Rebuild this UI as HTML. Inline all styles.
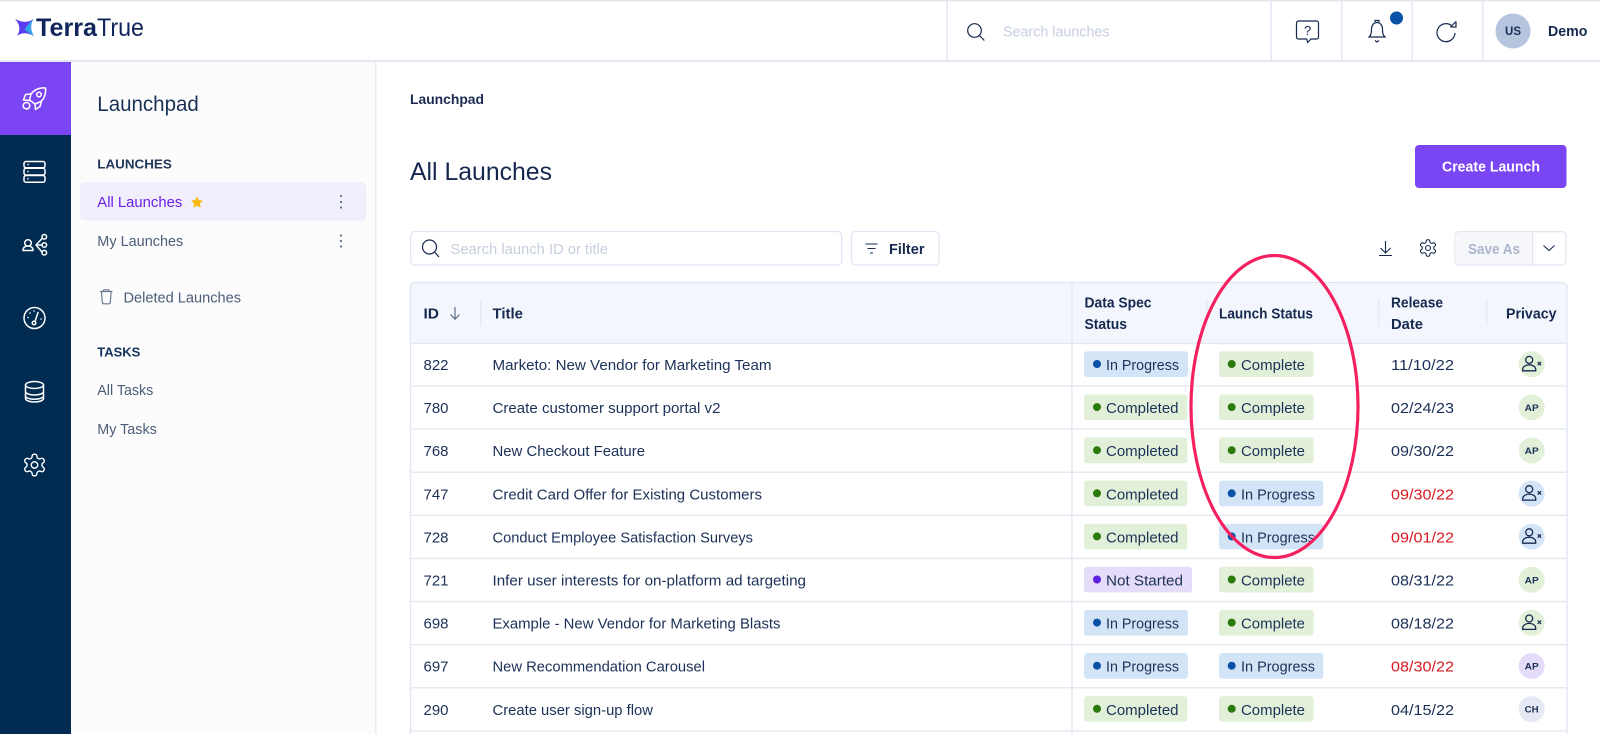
<!DOCTYPE html>
<html lang="en"><head><meta charset="utf-8"><title>TerraTrue Launchpad</title>
<style>
html,body{margin:0;padding:0;background:#fff;width:1600px;height:734px;overflow:hidden}
svg{display:block}
text{font-family:"Liberation Sans",sans-serif;white-space:pre}
.r{font-size:14.6px;fill:#1c3157}
.b{font-size:14.6px;fill:#1c3157}
.h{font-size:14.4px;font-weight:700;fill:#16294f}
.n{font-size:14.8px;fill:#4b5d78}
.a{font-size:9.6px;font-weight:700;fill:#1c3157}
</style></head><body>
<svg xmlns="http://www.w3.org/2000/svg" width="1600" height="734" viewBox="0 0 1600 734">
<defs>
<symbol id="gear" viewBox="0 0 24 24"><path fill="none" stroke-linecap="round" stroke-linejoin="round" d="M12.22 2h-.44a2 2 0 0 0-2 2v.18a2 2 0 0 1-1 1.73l-.43.25a2 2 0 0 1-2 0l-.15-.08a2 2 0 0 0-2.73.73l-.22.38a2 2 0 0 0 .73 2.73l.15.1a2 2 0 0 1 1 1.72v.51a2 2 0 0 1-1 1.74l-.15.09a2 2 0 0 0-.73 2.73l.22.38a2 2 0 0 0 2.73.73l.15-.08a2 2 0 0 1 2 0l.43.25a2 2 0 0 1 1 1.73V20a2 2 0 0 0 2 2h.44a2 2 0 0 0 2-2v-.18a2 2 0 0 1 1-1.73l.43-.25a2 2 0 0 1 2 0l.15.08a2 2 0 0 0 2.73-.73l.22-.39a2 2 0 0 0-.73-2.73l-.15-.08a2 2 0 0 1-1-1.74v-.5a2 2 0 0 1 1-1.74l.15-.09a2 2 0 0 0 .73-2.73l-.22-.38a2 2 0 0 0-2.73-.73l-.15.08a2 2 0 0 1-2 0l-.43-.25a2 2 0 0 1-1-1.73V4a2 2 0 0 0-2-2z"/><circle cx="12" cy="12" r="3" fill="none"/></symbol>
<g id="px" fill="none" stroke="#16294f" stroke-width="1.3"><circle cx="-2.5" cy="-4.4" r="3.5"/><path d="M-9 6.500v-1.300c0-3 3.300-4.700 6.500-4.700s6.500 1.700 6.500 4.700v1.300z"/><path d="M6 -2.400l3.400 3.400M9.400 -2.400l-3.400 3.400" stroke-width="1.200"/></g>
</defs>

<!-- top bar -->
<rect x="0" y="0" width="1600" height="1.500" fill="#e4e7ef"/>
<rect x="0" y="60" width="1600" height="2" fill="#e3e7f1"/>
<path d="M15 19Q26 24.500 33.500 19Q28.500 27 33.800 36Q24 30.500 17 36Q22.500 27 15 19Z" fill="#5a3df0"/>
<path d="M33.500 19Q28.500 27 33.800 36Q28 32.500 24.500 29.500Q28 24 33.500 19Z" fill="#35a4ea"/>
<text x="36" y="36" font-size="25" font-weight="700" fill="#10265a" textLength="61" lengthAdjust="spacingAndGlyphs">Terra</text>
<text x="97" y="36" font-size="25" fill="#10265a" textLength="47" lengthAdjust="spacingAndGlyphs">True</text>
<g fill="#e3e7f1"><rect x="946.500" y="1" width="1.500" height="59"/><rect x="1270.500" y="1" width="1.500" height="59"/><rect x="1341" y="1" width="1.500" height="59"/><rect x="1411.500" y="1" width="1.500" height="59"/><rect x="1482" y="1" width="1.500" height="59"/></g>
<g fill="none" stroke="#16294f" stroke-width="1.200">
<circle cx="974.500" cy="30.500" r="6.800"/><path d="M979.500 35.500l4.800 5"/>
<path d="M1298.500 21h18a2 2 0 0 1 2 2v14a2 2 0 0 1-2 2h-5.500l-3.300 3.500-1-3.500h-8.200a2 2 0 0 1-2-2v-14a2 2 0 0 1 2-2z"/>
<path d="M1369 37c2-2 2.500-3.500 2.500-7.500 0-4.500 2.500-7 5.500-7s5.500 2.500 5.500 7c0 4 .5 5.500 2.500 7.500z"/><path d="M1375 22v-1.500h4V22M1375 40.500l2 1.500 2-1.500"/>
<path d="M1451.500 25.500a9 9 0 1 0 3.500 7.500"/><path d="M1450.500 27h5.500v-5.500M1456 21.500l-5.500 5.500"/>
</g>
<text x="1304" y="35" font-size="13" fill="#16294f">?</text>
<circle cx="1396.500" cy="18" r="6.500" fill="#0a52a8"/>
<text x="1003" y="36.500" font-size="14.800" fill="#c6cfde" textLength="106.500" lengthAdjust="spacingAndGlyphs">Search launches</text>
<circle cx="1513" cy="31" r="17.500" fill="#b5c5de"/>
<text x="1505" y="35" font-size="11.500" font-weight="700" fill="#1a2f55" textLength="16" lengthAdjust="spacingAndGlyphs">US</text>
<text x="1548" y="36" font-size="14.500" font-weight="700" fill="#16294f" textLength="39.500" lengthAdjust="spacingAndGlyphs">Demo</text>

<!-- rail -->
<rect x="0" y="62" width="71" height="672" fill="#012b50"/>
<rect x="0" y="62" width="71" height="73" fill="#7c45f4"/>
<g fill="none" stroke="#fff" stroke-width="1.500" stroke-linejoin="round" stroke-linecap="round">
<path d="M45.500 88c-6-.5-11 1.500-14.500 6l-1.500 6 5.500 4 6-2.500c4-3.500 5-8 4.500-13.500z"/><circle cx="39" cy="94.500" r="2.300"/>
<path d="M31 94l-5.500.5-2 5.500 6 .5M35 104l.5 5.500 4.500-3 1.500-5"/><path d="M24 108a3.300 3.300 0 1 1 5.500-3.500 3.300 3.300 0 0 1-3 4.500z"/>
<rect x="24" y="161.500" width="21" height="6.300" rx="2"/><rect x="24" y="168.300" width="21" height="6.700" rx="2"/><rect x="24" y="175.500" width="21" height="6.700" rx="2"/>
<path d="M28 164.500h.1M28 171.500h.1M28 178.800h.1"/>
<circle cx="28" cy="243" r="3.300"/><path d="M23 250.500c0-3 2-4.500 5-4.500s5 1.500 5 4.500z"/>
<path d="M36 245l6-6.500M36 245h6M36 245l6 7"/><circle cx="44.300" cy="236.800" r="2.300"/><circle cx="44.300" cy="245" r="2.300"/><circle cx="44.300" cy="252.700" r="2.300"/>
<circle cx="34.500" cy="318" r="10.500"/><circle cx="34" cy="323" r="1.800"/><path d="M35 321.500l3-9M28 317.500h.1M30 313h.1M34 311h.1M41 319h.1"/>
<ellipse cx="34.500" cy="385" rx="9" ry="3.500"/><path d="M25.500 385v13.500c0 2 4 3.500 9 3.500s9-1.500 9-3.500V385M25.500 391.500c0 2 4 3.500 9 3.500s9-1.500 9-3.500M25.500 396c0 1.800 4 3.200 9 3.200s9-1.400 9-3.200"/>
</g>
<use href="#gear" x="21.500" y="452" width="26" height="26" stroke="#fff" stroke-width="1.300"/>

<!-- side panel -->
<rect x="71" y="62" width="304.500" height="672" fill="#fcfcfd"/>
<rect x="375" y="62" width="1.500" height="672" fill="#e9ebf4"/>
<text x="97.300" y="111" font-size="21" fill="#1a3355" textLength="101.500" lengthAdjust="spacingAndGlyphs">Launchpad</text>
<text x="97.300" y="168.300" font-size="12.500" font-weight="700" fill="#23395a" textLength="74.500" lengthAdjust="spacingAndGlyphs">LAUNCHES</text>
<rect x="80" y="182.300" width="286" height="38.500" rx="4" fill="#f1effc"/>
<text x="97.300" y="207" font-size="14.800" fill="#6a1fe8" textLength="85" lengthAdjust="spacingAndGlyphs">All Launches</text>
<path d="M197 196.200l1.800 3.900 4.200.5-3.100 2.900.8 4.200-3.700-2.100-3.700 2.100.8-4.200-3.100-2.900 4.200-.5z" fill="#fbb80f"/>
<g fill="#5f6f88"><circle cx="341" cy="196" r="1.100"/><circle cx="341" cy="202" r="1.100"/><circle cx="341" cy="207.500" r="1.100"/><circle cx="341" cy="235.500" r="1.100"/><circle cx="341" cy="241" r="1.100"/><circle cx="341" cy="246.500" r="1.100"/></g>
<text class="n" x="97.300" y="246" textLength="86" lengthAdjust="spacingAndGlyphs">My Launches</text>
<path d="M100 291.500h12.500M103 291.500l.8-1.700h5l.8 1.700M101.500 291.500l.8 11a1.500 1.500 0 0 0 1.500 1.300h5a1.500 1.500 0 0 0 1.500-1.300l.8-11" fill="none" stroke="#6a7a93" stroke-width="1.200"/>
<text class="n" x="123.500" y="302.500" textLength="117.500" lengthAdjust="spacingAndGlyphs">Deleted Launches</text>
<text x="97.300" y="356.700" font-size="12.500" font-weight="700" fill="#12325a" textLength="43" lengthAdjust="spacingAndGlyphs">TASKS</text>
<text class="n" x="97.300" y="395" textLength="56" lengthAdjust="spacingAndGlyphs">All Tasks</text>
<text class="n" x="97.300" y="434" textLength="59.500" lengthAdjust="spacingAndGlyphs">My Tasks</text>

<!-- main header -->
<text x="410" y="104" font-size="13.800" font-weight="700" fill="#1a2b4f" textLength="74" lengthAdjust="spacingAndGlyphs">Launchpad</text>
<text x="410" y="180" font-size="25" fill="#16274f" textLength="142" lengthAdjust="spacingAndGlyphs">All Launches</text>
<rect x="1415" y="145" width="151.500" height="43" rx="4" fill="#7a45f2"/>
<text x="1442" y="171.500" font-size="15" font-weight="700" fill="#fff" textLength="98" lengthAdjust="spacingAndGlyphs">Create Launch</text>

<!-- toolbar -->
<rect x="410.700" y="231.500" width="431" height="33.500" rx="4" fill="#fff" stroke="#dfe4f0" stroke-width="1.200"/>
<g fill="none" stroke="#16294f" stroke-width="1.200"><circle cx="429.500" cy="247" r="7"/><path d="M434.500 252l4.500 5"/></g>
<text x="450.500" y="254" font-size="14.800" fill="#c6cfde" textLength="157.500" lengthAdjust="spacingAndGlyphs">Search launch ID or title</text>
<rect x="851.500" y="231.500" width="87.500" height="33.500" rx="4" fill="#fff" stroke="#dfe4f0" stroke-width="1.200"/>
<path d="M865.500 244h12M867.500 248.500h8M870 253h3" stroke="#16294f" stroke-width="1.100" fill="none"/>
<text x="889" y="254" font-size="14.500" font-weight="700" fill="#16294f" textLength="35.500" lengthAdjust="spacingAndGlyphs">Filter</text>
<path d="M1385.500 241v11.500M1380.500 248l5 5 5-5M1379 255.500h13" stroke="#16294f" stroke-width="1.100" fill="none"/>
<use href="#gear" x="1418" y="238" width="20" height="20" stroke="#16294f" stroke-width="1.300"/>
<rect x="1455" y="231.700" width="111" height="33.300" rx="4" fill="#fff" stroke="#dfe4f0" stroke-width="1.200"/>
<path d="M1459 232.300h73v32.100h-73a4 4 0 0 1-4-4v-24a4 4 0 0 1 4-4z" fill="#f6f7fb"/>
<rect x="1532" y="232" width="1.200" height="33" fill="#dfe4f0"/>
<text x="1468" y="254" font-size="14.500" font-weight="700" fill="#abb6ca" textLength="52" lengthAdjust="spacingAndGlyphs">Save As</text>
<path d="M1543.500 245.500l5.500 5 5.500-5" fill="none" stroke="#16294f" stroke-width="1.100"/>

<!-- table -->
<path d="M410.500 734V287.500a5 5 0 0 1 5-5H1562a5 5 0 0 1 5 5V734" fill="#fff" stroke="#dfe4f0" stroke-width="1.300"/>
<path d="M411.200 343V288a5 5 0 0 1 5-5H1561.500a5 5 0 0 1 5 5v55z" fill="#f4f6fd"/>
<g fill="#e3e7f2">
<rect x="480" y="300" width="1.300" height="26"/><rect x="1071.300" y="283" width="1.300" height="451"/><rect x="1206" y="300" width="1.300" height="26"/><rect x="1378" y="300" width="1.300" height="26"/><rect x="1486" y="300" width="1.300" height="26"/>
<rect x="410.500" y="342.800" width="1156.500" height="1.300"/><rect x="410.500" y="385.400" width="1156.500" height="1.300"/><rect x="410.500" y="428.500" width="1156.500" height="1.300"/><rect x="410.500" y="471.600" width="1156.500" height="1.300"/><rect x="410.500" y="514.700" width="1156.500" height="1.300"/><rect x="410.500" y="557.800" width="1156.500" height="1.300"/><rect x="410.500" y="600.900" width="1156.500" height="1.300"/><rect x="410.500" y="644" width="1156.500" height="1.300"/><rect x="410.500" y="687.100" width="1156.500" height="1.300"/><rect x="410.500" y="730.200" width="1156.500" height="1.300"/>
</g>
<text class="h" x="423.500" y="318.700" textLength="15.500" lengthAdjust="spacingAndGlyphs">ID</text>
<path d="M455 307v12M450.500 314.500l4.500 4.700 4.500-4.700" fill="none" stroke="#52627f" stroke-width="1.100"/>
<text class="h" x="492.500" y="318.700" textLength="30.500" lengthAdjust="spacingAndGlyphs">Title</text>
<text class="h" x="1084.500" y="307.300" textLength="67" lengthAdjust="spacingAndGlyphs">Data Spec</text>
<text class="h" x="1084.500" y="329" textLength="42.500" lengthAdjust="spacingAndGlyphs">Status</text>
<text class="h" x="1219" y="318.300" textLength="94" lengthAdjust="spacingAndGlyphs">Launch Status</text>
<text class="h" x="1391" y="307.300" textLength="52" lengthAdjust="spacingAndGlyphs">Release</text>
<text class="h" x="1391" y="329" textLength="32" lengthAdjust="spacingAndGlyphs">Date</text>
<text class="h" x="1506" y="318.300" textLength="50.500" lengthAdjust="spacingAndGlyphs">Privacy</text>

<!-- row 1 -->
<g>
<text class="r" x="423.500" y="370" textLength="25" lengthAdjust="spacingAndGlyphs">822</text>
<text class="r" x="492.500" y="370" textLength="279" lengthAdjust="spacingAndGlyphs">Marketo: New Vendor for Marketing Team</text>
<rect x="1084" y="351.300" width="104" height="25.700" rx="3" fill="#d4e4f7"/><circle cx="1097" cy="364" r="4" fill="#0a52a8"/><text class="b" x="1106" y="370" textLength="73" lengthAdjust="spacingAndGlyphs">In Progress</text>
<rect x="1219" y="351.300" width="94.700" height="25.700" rx="3" fill="#e2f0d9"/><circle cx="1231.700" cy="364" r="4" fill="#2b7a0b"/><text class="b" x="1241" y="370" textLength="64" lengthAdjust="spacingAndGlyphs">Complete</text>
<text class="r" x="1391" y="370" textLength="63" lengthAdjust="spacingAndGlyphs">11/10/22</text>
<circle cx="1531.700" cy="364.300" r="13" fill="#e2f0d9"/><use href="#px" transform="translate(1531.700,364.300)"/>
</g>
<!-- row 2 -->
<g transform="translate(0,43.100)">
<text class="r" x="423.500" y="370" textLength="25" lengthAdjust="spacingAndGlyphs">780</text>
<text class="r" x="492.500" y="370" textLength="228" lengthAdjust="spacingAndGlyphs">Create customer support portal v2</text>
<rect x="1084" y="351.300" width="103.300" height="25.700" rx="3" fill="#e2f0d9"/><circle cx="1097" cy="364" r="4" fill="#2b7a0b"/><text class="b" x="1106" y="370" textLength="72.500" lengthAdjust="spacingAndGlyphs">Completed</text>
<rect x="1219" y="351.300" width="94.700" height="25.700" rx="3" fill="#e2f0d9"/><circle cx="1231.700" cy="364" r="4" fill="#2b7a0b"/><text class="b" x="1241" y="370" textLength="64" lengthAdjust="spacingAndGlyphs">Complete</text>
<text class="r" x="1391" y="370" textLength="63" lengthAdjust="spacingAndGlyphs">02/24/23</text>
<circle cx="1531.700" cy="364.300" r="13" fill="#e2f0d9"/><text class="a" x="1524.700" y="367.800" textLength="14" lengthAdjust="spacingAndGlyphs">AP</text>
</g>
<!-- row 3 -->
<g transform="translate(0,86.200)">
<text class="r" x="423.500" y="370" textLength="25" lengthAdjust="spacingAndGlyphs">768</text>
<text class="r" x="492.500" y="370" textLength="152.500" lengthAdjust="spacingAndGlyphs">New Checkout Feature</text>
<rect x="1084" y="351.300" width="103.300" height="25.700" rx="3" fill="#e2f0d9"/><circle cx="1097" cy="364" r="4" fill="#2b7a0b"/><text class="b" x="1106" y="370" textLength="72.500" lengthAdjust="spacingAndGlyphs">Completed</text>
<rect x="1219" y="351.300" width="94.700" height="25.700" rx="3" fill="#e2f0d9"/><circle cx="1231.700" cy="364" r="4" fill="#2b7a0b"/><text class="b" x="1241" y="370" textLength="64" lengthAdjust="spacingAndGlyphs">Complete</text>
<text class="r" x="1391" y="370" textLength="63" lengthAdjust="spacingAndGlyphs">09/30/22</text>
<circle cx="1531.700" cy="364.300" r="13" fill="#e2f0d9"/><text class="a" x="1524.700" y="367.800" textLength="14" lengthAdjust="spacingAndGlyphs">AP</text>
</g>
<!-- row 4 -->
<g transform="translate(0,129.300)">
<text class="r" x="423.500" y="370" textLength="25" lengthAdjust="spacingAndGlyphs">747</text>
<text class="r" x="492.500" y="370" textLength="269.500" lengthAdjust="spacingAndGlyphs">Credit Card Offer for Existing Customers</text>
<rect x="1084" y="351.300" width="103.300" height="25.700" rx="3" fill="#e2f0d9"/><circle cx="1097" cy="364" r="4" fill="#2b7a0b"/><text class="b" x="1106" y="370" textLength="72.500" lengthAdjust="spacingAndGlyphs">Completed</text>
<rect x="1219" y="351.300" width="104.300" height="25.700" rx="3" fill="#d4e4f7"/><circle cx="1231.700" cy="364" r="4" fill="#0a52a8"/><text class="b" x="1241" y="370" textLength="74" lengthAdjust="spacingAndGlyphs">In Progress</text>
<text class="r" x="1391" y="370" style="fill:#d7191f" textLength="63" lengthAdjust="spacingAndGlyphs">09/30/22</text>
<circle cx="1531.700" cy="364.300" r="13" fill="#d4e4f7"/><use href="#px" transform="translate(1531.700,364.300)"/>
</g>
<!-- row 5 -->
<g transform="translate(0,172.400)">
<text class="r" x="423.500" y="370" textLength="25" lengthAdjust="spacingAndGlyphs">728</text>
<text class="r" x="492.500" y="370" textLength="260.500" lengthAdjust="spacingAndGlyphs">Conduct Employee Satisfaction Surveys</text>
<rect x="1084" y="351.300" width="103.300" height="25.700" rx="3" fill="#e2f0d9"/><circle cx="1097" cy="364" r="4" fill="#2b7a0b"/><text class="b" x="1106" y="370" textLength="72.500" lengthAdjust="spacingAndGlyphs">Completed</text>
<rect x="1219" y="351.300" width="104.300" height="25.700" rx="3" fill="#d4e4f7"/><circle cx="1231.700" cy="364" r="4" fill="#0a52a8"/><text class="b" x="1241" y="370" textLength="74" lengthAdjust="spacingAndGlyphs">In Progress</text>
<text class="r" x="1391" y="370" style="fill:#d7191f" textLength="63" lengthAdjust="spacingAndGlyphs">09/01/22</text>
<circle cx="1531.700" cy="364.300" r="13" fill="#d4e4f7"/><use href="#px" transform="translate(1531.700,364.300)"/>
</g>
<!-- row 6 -->
<g transform="translate(0,215.500)">
<text class="r" x="423.500" y="370" textLength="25" lengthAdjust="spacingAndGlyphs">721</text>
<text class="r" x="492.500" y="370" textLength="313.500" lengthAdjust="spacingAndGlyphs">Infer user interests for on-platform ad targeting</text>
<rect x="1084" y="351.300" width="108" height="25.700" rx="3" fill="#e5dcfa"/><circle cx="1097" cy="364" r="4" fill="#5f1fe0"/><text class="b" x="1106" y="370" textLength="77" lengthAdjust="spacingAndGlyphs">Not Started</text>
<rect x="1219" y="351.300" width="94.700" height="25.700" rx="3" fill="#e2f0d9"/><circle cx="1231.700" cy="364" r="4" fill="#2b7a0b"/><text class="b" x="1241" y="370" textLength="64" lengthAdjust="spacingAndGlyphs">Complete</text>
<text class="r" x="1391" y="370" textLength="63" lengthAdjust="spacingAndGlyphs">08/31/22</text>
<circle cx="1531.700" cy="364.300" r="13" fill="#e2f0d9"/><text class="a" x="1524.700" y="367.800" textLength="14" lengthAdjust="spacingAndGlyphs">AP</text>
</g>
<!-- row 7 -->
<g transform="translate(0,258.600)">
<text class="r" x="423.500" y="370" textLength="25" lengthAdjust="spacingAndGlyphs">698</text>
<text class="r" x="492.500" y="370" textLength="288" lengthAdjust="spacingAndGlyphs">Example - New Vendor for Marketing Blasts</text>
<rect x="1084" y="351.300" width="104" height="25.700" rx="3" fill="#d4e4f7"/><circle cx="1097" cy="364" r="4" fill="#0a52a8"/><text class="b" x="1106" y="370" textLength="73" lengthAdjust="spacingAndGlyphs">In Progress</text>
<rect x="1219" y="351.300" width="94.700" height="25.700" rx="3" fill="#e2f0d9"/><circle cx="1231.700" cy="364" r="4" fill="#2b7a0b"/><text class="b" x="1241" y="370" textLength="64" lengthAdjust="spacingAndGlyphs">Complete</text>
<text class="r" x="1391" y="370" textLength="63" lengthAdjust="spacingAndGlyphs">08/18/22</text>
<circle cx="1531.700" cy="364.300" r="13" fill="#e2f0d9"/><use href="#px" transform="translate(1531.700,364.300)"/>
</g>
<!-- row 8 -->
<g transform="translate(0,301.700)">
<text class="r" x="423.500" y="370" textLength="25" lengthAdjust="spacingAndGlyphs">697</text>
<text class="r" x="492.500" y="370" textLength="212.500" lengthAdjust="spacingAndGlyphs">New Recommendation Carousel</text>
<rect x="1084" y="351.300" width="104" height="25.700" rx="3" fill="#d4e4f7"/><circle cx="1097" cy="364" r="4" fill="#0a52a8"/><text class="b" x="1106" y="370" textLength="73" lengthAdjust="spacingAndGlyphs">In Progress</text>
<rect x="1219" y="351.300" width="104.300" height="25.700" rx="3" fill="#d4e4f7"/><circle cx="1231.700" cy="364" r="4" fill="#0a52a8"/><text class="b" x="1241" y="370" textLength="74" lengthAdjust="spacingAndGlyphs">In Progress</text>
<text class="r" x="1391" y="370" style="fill:#d7191f" textLength="63" lengthAdjust="spacingAndGlyphs">08/30/22</text>
<circle cx="1531.700" cy="364.300" r="13" fill="#e5dcfa"/><text class="a" x="1524.700" y="367.800" textLength="14" lengthAdjust="spacingAndGlyphs">AP</text>
</g>
<!-- row 9 -->
<g transform="translate(0,344.800)">
<text class="r" x="423.500" y="370" textLength="25" lengthAdjust="spacingAndGlyphs">290</text>
<text class="r" x="492.500" y="370" textLength="160.500" lengthAdjust="spacingAndGlyphs">Create user sign-up flow</text>
<rect x="1084" y="351.300" width="103.300" height="25.700" rx="3" fill="#e2f0d9"/><circle cx="1097" cy="364" r="4" fill="#2b7a0b"/><text class="b" x="1106" y="370" textLength="72.500" lengthAdjust="spacingAndGlyphs">Completed</text>
<rect x="1219" y="351.300" width="94.700" height="25.700" rx="3" fill="#e2f0d9"/><circle cx="1231.700" cy="364" r="4" fill="#2b7a0b"/><text class="b" x="1241" y="370" textLength="64" lengthAdjust="spacingAndGlyphs">Complete</text>
<text class="r" x="1391" y="370" textLength="63" lengthAdjust="spacingAndGlyphs">04/15/22</text>
<circle cx="1531.700" cy="364.300" r="13" fill="#e6e9f3"/><text class="a" x="1524.700" y="367.800" textLength="14" lengthAdjust="spacingAndGlyphs">CH</text>
</g>

<!-- hand-drawn highlight -->
<ellipse cx="1274.500" cy="406.500" rx="83.500" ry="151" fill="none" stroke="#f5205f" stroke-width="3.200"/>
</svg>
</body></html>
